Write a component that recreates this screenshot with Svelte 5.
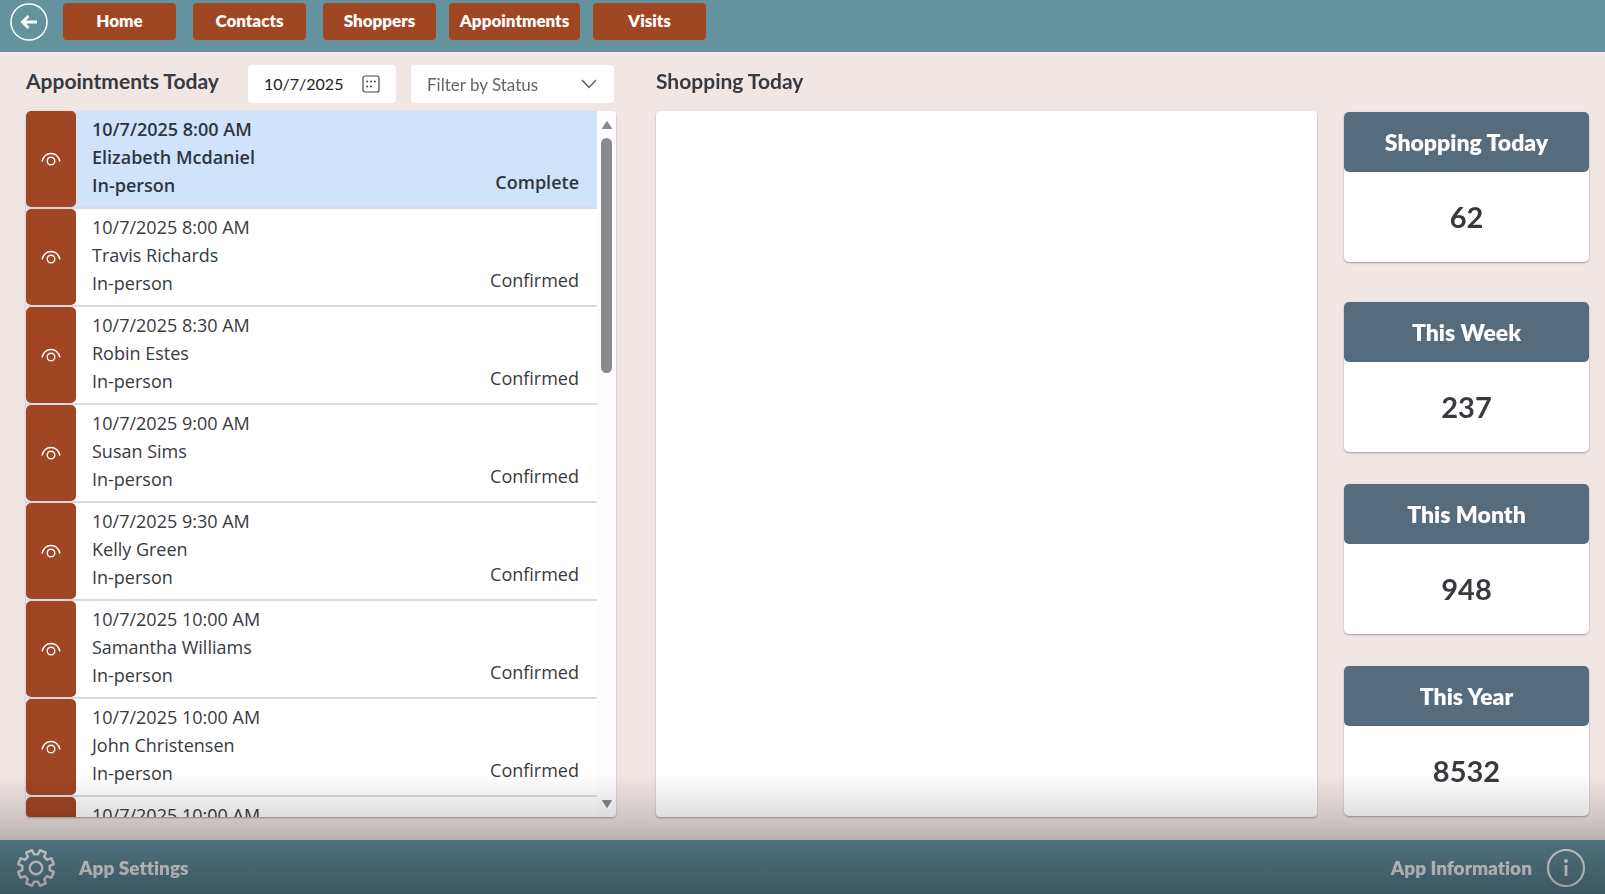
<script>
  const nav = ['Home', 'Contacts', 'Shoppers', 'Appointments', 'Visits'];

  const appointments = [
    { time: '10/7/2025 8:00 AM', name: 'Elizabeth Mcdaniel', type: 'In-person', status: 'Complete' },
    { time: '10/7/2025 8:00 AM', name: 'Travis Richards', type: 'In-person', status: 'Confirmed' },
    { time: '10/7/2025 8:30 AM', name: 'Robin Estes', type: 'In-person', status: 'Confirmed' },
    { time: '10/7/2025 9:00 AM', name: 'Susan Sims', type: 'In-person', status: 'Confirmed' },
    { time: '10/7/2025 9:30 AM', name: 'Kelly Green', type: 'In-person', status: 'Confirmed' },
    { time: '10/7/2025 10:00 AM', name: 'Samantha Williams', type: 'In-person', status: 'Confirmed' },
    { time: '10/7/2025 10:00 AM', name: 'John Christensen', type: 'In-person', status: 'Confirmed' },
    { time: '10/7/2025 10:00 AM', name: '', type: '', status: '' }
  ];

  const stats = [
    { label: 'Shopping Today', value: 62 },
    { label: 'This Week', value: 237 },
    { label: 'This Month', value: 948 },
    { label: 'This Year', value: 8532 }
  ];

  // Outline of an eight-toothed gear centred on the origin.
  const teeth = 8;
  const point = (r, deg) => {
    const a = (deg * Math.PI) / 180;
    return `${(r * Math.cos(a)).toFixed(2)} ${(r * Math.sin(a)).toFixed(2)}`;
  };
  const gear =
    'M' +
    Array.from({ length: teeth }, (_, i) => {
      const c = (i * 360) / teeth + 22.5;
      return [point(13.8, c - 14), point(18.2, c - 10), point(18.2, c + 10), point(13.8, c + 14)].join('L');
    }).join('L') +
    'Z';

  let selected = $state(0);
  let date = $state('10/7/2025');
</script>

<div class="app">
  <header>
    <button class="back" aria-label="Back">
      <svg width="38" height="38" viewBox="0 0 38 38" fill="none" stroke="#fff">
        <circle cx="19" cy="19" r="18" stroke-width="1.5" />
        <path d="M27 19H12.500M18.500 13L12.500 19L18.500 25" stroke-width="2.800" />
      </svg>
    </button>
    <nav>
      {#each nav as item}
        <button class:wide={item === 'Appointments'}>{item}</button>
      {/each}
    </nav>
  </header>

  <main>
    <section class="appointments">
      <div class="bar">
        <h2>Appointments Today</h2>
        <div class="date">
          <input type="text" aria-label="Date" bind:value={date} />
          <button aria-label="Open calendar">
            <svg width="18" height="18" viewBox="0 0 18 18">
              <rect x="1" y="1" width="16" height="16" rx="2" fill="none" stroke="#444" stroke-width="1.200" />
              <g fill="#444">
                <circle cx="5.200" cy="6.500" r="1" /><circle cx="9" cy="6.500" r="1" /><circle cx="12.800" cy="6.500" r="1" />
                <circle cx="5.200" cy="11.500" r="1" /><circle cx="9" cy="11.500" r="1" />
              </g>
            </svg>
          </button>
        </div>
        <div class="filter">
          <select aria-label="Filter by Status">
            <option>Filter by Status</option>
            <option>Complete</option>
            <option>Confirmed</option>
          </select>
          <svg width="16" height="10" viewBox="0 0 16 10" fill="none" stroke="#555" stroke-width="1.200">
            <path d="M1 1L8 8.500L15 1" />
          </svg>
        </div>
      </div>
      <div class="panel list">
        <ul>
          {#each appointments as a, i}
            <li class:selected={i === selected}>
              <button class="view" aria-label="View appointment" onclick={() => (selected = i)}>
                <svg width="20" height="14" viewBox="0 0 20 14" fill="none" stroke="#fff" stroke-width="1.400">
                  <path d="M1 9.500C2.500 4 6 1.500 10 1.500S17.500 4 19 9.500" />
                  <circle cx="10" cy="9" r="3.800" />
                </svg>
              </button>
              <div class="details">
                <span>{a.time}</span>
                <span>{a.name}</span>
                <span>{a.type}</span>
              </div>
              <span class="status">{a.status}</span>
            </li>
          {/each}
        </ul>
        <div class="scroll" aria-hidden="true">
          <svg width="12" height="10" viewBox="0 0 12 10"><path d="M6 1.500L10.500 8.500H1.500Z" fill="#888789" stroke="#888789" stroke-linejoin="round" /></svg>
          <div class="track"><div class="thumb"></div></div>
          <svg width="12" height="10" viewBox="0 0 12 10"><path d="M6 8.500L10.500 1.500H1.500Z" fill="#888789" stroke="#888789" stroke-linejoin="round" /></svg>
        </div>
      </div>
    </section>

    <section class="shopping">
      <div class="bar"><h2>Shopping Today</h2></div>
      <div class="panel"></div>
    </section>

    <aside>
      {#each stats as s}
        <div class="card">
          <h3>{s.label}</h3>
          <p>{s.value}</p>
        </div>
      {/each}
    </aside>
  </main>

  <footer>
    <button>
      <svg width="40" height="40" viewBox="-20 -20 40 40" fill="none" stroke="#fff" stroke-width="2.400" stroke-linejoin="round">
        <path d={gear} />
        <circle r="6.300" />
      </svg>
      <span>App Settings</span>
    </button>
    <button>
      <span>App Information</span>
      <svg width="40" height="40" viewBox="0 0 40 40" fill="none" stroke="#fff" stroke-width="2.200">
        <circle cx="20" cy="20" r="18" />
        <path d="M20 17V28" stroke-width="2.800" />
        <circle cx="20" cy="13" r="2" fill="#fff" stroke="none" />
      </svg>
    </button>
  </footer>
  <div class="shade"></div>
</div>

<style>
  :global(body) {
    margin: 0;
  }
  .app {
    position: relative;
    display: flex;
    flex-direction: column;
    height: 100vh;
    background: #f0e6e4;
    color: #383a3f;
    font-family: Lato, sans-serif;
    font-variant-ligatures: none;
    overflow: hidden;
  }
  .app :global(*) {
    box-sizing: border-box;
  }
  button {
    border: 0;
    padding: 0;
    background: none;
    color: inherit;
    font: inherit;
    font-variant-ligatures: none;
    cursor: pointer;
  }
  svg {
    display: block;
    flex: none;
  }
  h2,
  h3,
  p,
  ul {
    margin: 0;
    padding: 0;
  }
  header {
    display: flex;
    align-items: flex-start;
    gap: 15px;
    height: 52px;
    padding: 3px 10px;
    background: #64929f;
  }
  nav {
    display: flex;
    gap: 17px;
  }
  nav button {
    width: 113px;
    height: 37px;
    padding-bottom: 2px;
    border-radius: 4px;
    background: #a14623;
    color: #fff;
    font-size: 17px;
    font-weight: 800;
  }
  nav .wide {
    width: 131px;
    margin: 0 -4px;
  }
  main {
    flex: 1;
    min-height: 0;
    display: grid;
    grid-template-columns: minmax(0, 603fr) minmax(0, 661fr) 245px;
    grid-template-rows: minmax(0, 1fr);
    column-gap: 27px;
    padding: 0 16px 23px 26px;
  }
  section {
    display: flex;
    flex-direction: column;
    min-height: 0;
  }
  .appointments {
    margin-right: 13px;
  }
  .bar {
    display: flex;
    align-items: center;
    height: 59px;
    flex: none;
    padding-top: 5px;
  }
  h2 {
    flex: 1;
    padding-bottom: 6px;
    font-size: 21px;
    line-height: 26px;
    font-weight: 700;
    white-space: nowrap;
  }
  .date,
  .filter {
    display: flex;
    align-items: center;
    height: 38px;
    border-radius: 4px;
    background: #fff;
  }
  .date {
    width: 148px;
    padding: 0 16px;
    margin-right: 15px;
  }
  .date input {
    flex: 1;
    min-width: 0;
    border: 0;
    padding: 0 0 2px;
    background: none;
    color: #222;
    font: 16px Lato, sans-serif;
  }
  .filter {
    position: relative;
    width: 203px;
    margin-right: 2px;
  }
  .filter select {
    appearance: none;
    width: 100%;
    height: 100%;
    border: 0;
    padding: 0 16px;
    background: none;
    color: #66666a;
    font: 17px Lato, sans-serif;
  }
  .filter svg {
    position: absolute;
    right: 17px;
    pointer-events: none;
  }
  .panel {
    flex: 1;
    min-height: 0;
    border-radius: 4px;
    background: #fff;
    box-shadow: 0 1px 2px rgba(60, 40, 50, 0.4);
  }
  .list {
    display: flex;
    overflow: hidden;
  }
  ul {
    flex: 1;
    overflow-y: auto;
    scrollbar-width: none;
    list-style: none;
    font-family: "Open Sans", sans-serif;
    font-size: 18px;
    line-height: 28px;
  }
  li {
    display: flex;
    height: 98px;
    border-bottom: 2px solid #dcdae0;
    background: #fff;
  }
  .selected {
    background: #cfe4fa;
    font-weight: 600;
    color: #2c3642;
  }
  .view {
    display: grid;
    place-items: center;
    width: 50px;
    height: 96px;
    border-radius: 5px;
    background: #a14623;
  }
  .details {
    display: flex;
    flex: 1;
    flex-direction: column;
    padding: 4px 16px;
  }
  .status {
    align-self: flex-end;
    padding: 0 18px 11px 0;
  }
  .scroll {
    display: flex;
    flex-direction: column;
    align-items: center;
    width: 19px;
    padding: 9px 0 8px;
    background: #fefcff;
  }
  .track {
    flex: 1;
    padding: 8px 0;
  }
  .thumb {
    width: 11px;
    height: 36%;
    border-radius: 6px;
    background: #8b8a8d;
  }
  aside {
    display: flex;
    flex-direction: column;
    gap: 32px;
    padding-top: 60px;
  }
  .card {
    height: 150px;
    border-radius: 5px;
    background: #fff;
    box-shadow: 0 1px 2px rgba(60, 40, 50, 0.4);
    text-align: center;
  }
  .card:first-child {
    margin-bottom: 8px;
  }
  h3 {
    height: 60px;
    border-radius: 5px;
    background: #556b7e;
    color: #fff;
    font-size: 23px;
    line-height: 60px;
    font-weight: 800;
  }
  p {
    font-size: 29px;
    line-height: 90px;
    font-weight: 700;
  }
  footer {
    display: flex;
    justify-content: space-between;
    align-items: center;
    height: 54px;
    padding: 2px 19px 0 16px;
    background: #64929f;
  }
  footer button {
    display: flex;
    align-items: center;
    gap: 14px;
    color: #fff;
    font-size: 19px;
    font-weight: 800;
  }
  footer button:first-child {
    gap: 23px;
  }
  footer span {
    padding-bottom: 2px;
  }
  .shade {
    position: absolute;
    inset: auto 0 0;
    height: 120px;
    background: linear-gradient(rgba(0, 0, 0, 0), rgba(0, 0, 0, 0.13) 36%, rgba(0, 0, 0, 0.23) 56%, rgba(0, 0, 0, 0.4));
    pointer-events: none;
  }
</style>
